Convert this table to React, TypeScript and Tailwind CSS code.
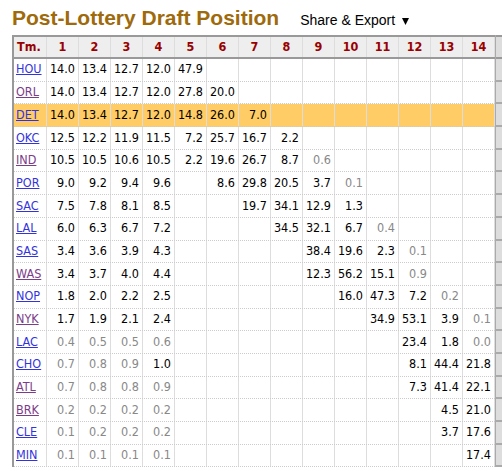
import React from 'react';

type Row = { tm: string; visited?: boolean; hl?: boolean; vals: (number | null)[] };

const _ = null;

const rows: Row[] = [
  { tm: 'HOU', vals: [14.0, 13.4, 12.7, 12.0, 47.9] },
  { tm: 'ORL', visited: true, vals: [14.0, 13.4, 12.7, 12.0, 27.8, 20.0] },
  { tm: 'DET', hl: true, vals: [14.0, 13.4, 12.7, 12.0, 14.8, 26.0, 7.0] },
  { tm: 'OKC', vals: [12.5, 12.2, 11.9, 11.5, 7.2, 25.7, 16.7, 2.2] },
  { tm: 'IND', visited: true, vals: [10.5, 10.5, 10.6, 10.5, 2.2, 19.6, 26.7, 8.7, 0.6] },
  { tm: 'POR', vals: [9.0, 9.2, 9.4, 9.6, _, 8.6, 29.8, 20.5, 3.7, 0.1] },
  { tm: 'SAC', vals: [7.5, 7.8, 8.1, 8.5, _, _, 19.7, 34.1, 12.9, 1.3] },
  { tm: 'LAL', vals: [6.0, 6.3, 6.7, 7.2, _, _, _, 34.5, 32.1, 6.7, 0.4] },
  { tm: 'SAS', vals: [3.4, 3.6, 3.9, 4.3, _, _, _, _, 38.4, 19.6, 2.3, 0.1] },
  { tm: 'WAS', visited: true, vals: [3.4, 3.7, 4.0, 4.4, _, _, _, _, 12.3, 56.2, 15.1, 0.9] },
  { tm: 'NOP', vals: [1.8, 2.0, 2.2, 2.5, _, _, _, _, _, 16.0, 47.3, 7.2, 0.2] },
  { tm: 'NYK', visited: true, vals: [1.7, 1.9, 2.1, 2.4, _, _, _, _, _, _, 34.9, 53.1, 3.9, 0.1] },
  { tm: 'LAC', vals: [0.4, 0.5, 0.5, 0.6, _, _, _, _, _, _, _, 23.4, 1.8, 0.0] },
  { tm: 'CHO', vals: [0.7, 0.8, 0.9, 1.0, _, _, _, _, _, _, _, 8.1, 44.4, 21.8] },
  { tm: 'ATL', visited: true, vals: [0.7, 0.8, 0.8, 0.9, _, _, _, _, _, _, _, 7.3, 41.4, 22.1] },
  { tm: 'BRK', visited: true, vals: [0.2, 0.2, 0.2, 0.2, _, _, _, _, _, _, _, _, 4.5, 21.0] },
  { tm: 'CLE', vals: [0.1, 0.2, 0.2, 0.2, _, _, _, _, _, _, _, _, 3.7, 17.6] },
  { tm: 'MIN', vals: [0.1, 0.1, 0.1, 0.1, _, _, _, _, _, _, _, _, _, 17.4] },
];

const picks = Array.from({ length: 14 }, (_, i) => i + 1);

export default function App() {
  return (
    <div className="h-[471px] w-[502px] overflow-hidden bg-white">
      <div className="flex items-baseline pl-[12px] pt-[3px] pb-[2px]">
        <h1 className="font-['Liberation_Sans',Arial,sans-serif] text-[21px] font-bold leading-[30px] text-[#9e6a0c]">
          Post-Lottery Draft Position
        </h1>
        <span className="ml-[21px] flex items-baseline font-['Liberation_Sans',Arial,sans-serif] text-[14px] text-black">
          Share &amp; Export
          <svg className="ml-[7px]" width="7" height="7" viewBox="0 0 7 7">
            <polygon points="0,0 7,0 3.5,7" fill="#000" />
          </svg>
        </span>
      </div>

      <div className="ml-[12px] flex font-['DejaVu_Sans_Condensed','DejaVu_Sans',sans-serif] text-[12.5px]">
        <div className="border-l-2 border-[#999]">
          <div className="flex h-[24px] items-center border-y-2 border-[#999] bg-[#eee] font-bold text-[#990000]">
            <div className="flex h-full w-[33px] items-center border-r border-[#ddd] pl-[3px]">Tm.</div>
            {picks.map((p) => (
              <div key={p} className="flex h-full w-[32px] items-center justify-center border-r border-[#ddd]">
                {p}
              </div>
            ))}
          </div>
          {rows.map((r) => (
            <div
              key={r.tm}
              className={`flex h-[22.7px] items-center border-b border-dotted border-[#ccc] ${r.hl ? 'bg-[#ffcc66]' : 'bg-white'}`}
            >
              <div className="flex h-full w-[33px] items-center border-r border-[#ddd] pl-[2px]">
                <a href="#" className={`underline ${r.visited ? 'text-[#7b3c8a]' : 'text-[#3333dd]'}`}>
                  {r.tm}
                </a>
              </div>
              {picks.map((p, i) => {
                const v = r.vals[i];
                return (
                  <div
                    key={p}
                    className={`flex h-full w-[32px] items-center justify-end border-r border-[#ddd] pr-[3px] ${
                      v !== null && v !== undefined && v < 1 ? 'text-[#888]' : 'text-black'
                    }`}
                  >
                    {v !== null && v !== undefined ? v.toFixed(1) : ''}
                  </div>
                );
              })}
            </div>
          ))}
        </div>
        <div className="w-[8px] border-l border-[#aaa] bg-[#ddd]">
          <div className="h-[24px] border-y-2 border-[#999]" />
          {rows.map((r) => (
            <div key={r.tm} className="h-[22.7px] border-b-2 border-[#aaa]" />
          ))}
        </div>
      </div>
    </div>
  );
}
